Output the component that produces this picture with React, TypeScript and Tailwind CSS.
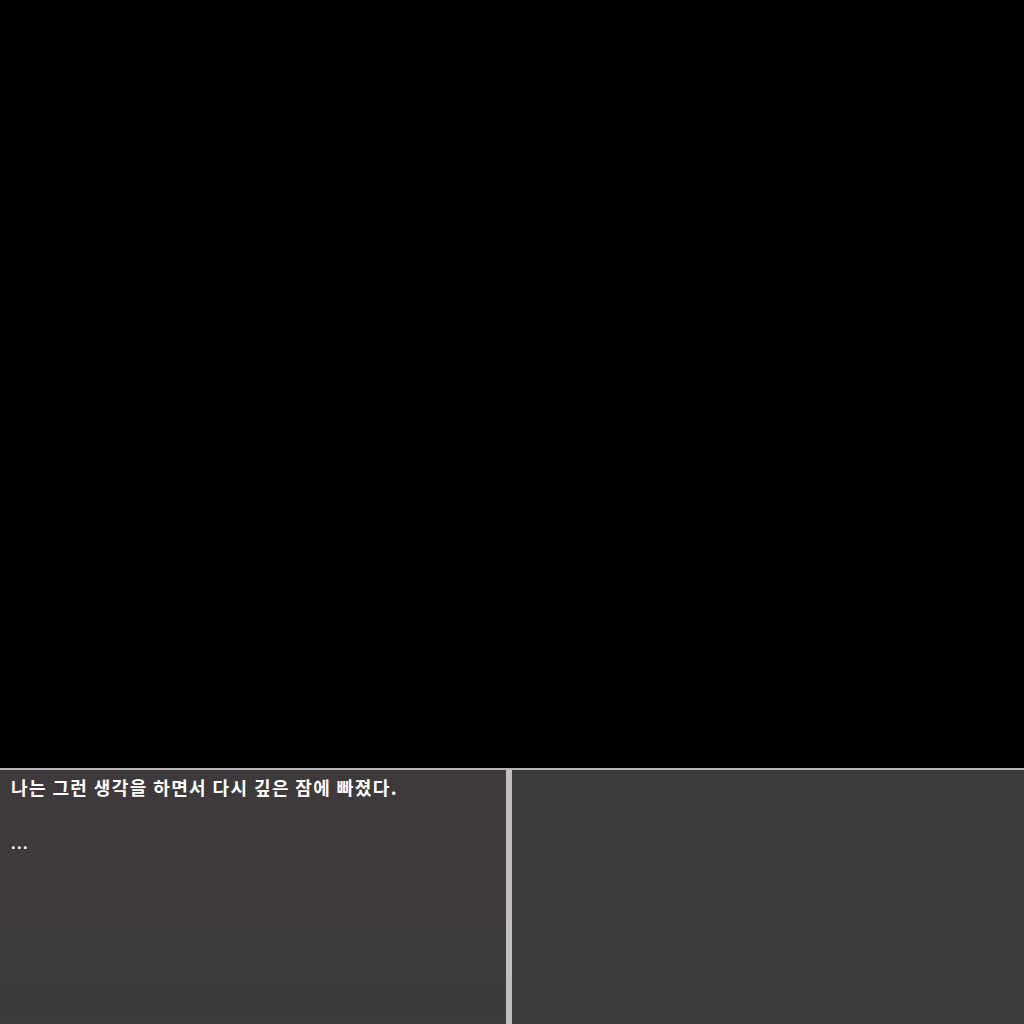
export default function App() {
  return (
    <div className="flex h-[1024px] w-[1024px] flex-col bg-black">
      <div className="h-[768px] shrink-0 bg-black" />
      <div className="h-[2px] shrink-0 bg-[#b4b4b4]" />
      <div className="flex flex-1">
        {/* 대사 창 */}
        <div
          className="w-[506px] bg-gradient-to-b from-[#3e3a3b] via-[#3e3a3b] to-[#3b3b3b] px-[11px] pt-[4px] text-[18px] font-semibold leading-[26px] tracking-[1.4px] text-white"
          style={{ fontFamily: '"Noto Sans CJK KR", "Noto Sans", sans-serif' }}
        >
          <p>나는 그런 생각을 하면서 다시 깊은 잠에 빠졌다.</p>
          <p>&nbsp;</p>
          <p className="mt-[4px] text-[14px]">...</p>
        </div>
        <div className="w-[6px] bg-[#c0c0c0]" />
        <div className="flex-1 bg-[#3c3c3c]" />
      </div>
    </div>
  );
}
